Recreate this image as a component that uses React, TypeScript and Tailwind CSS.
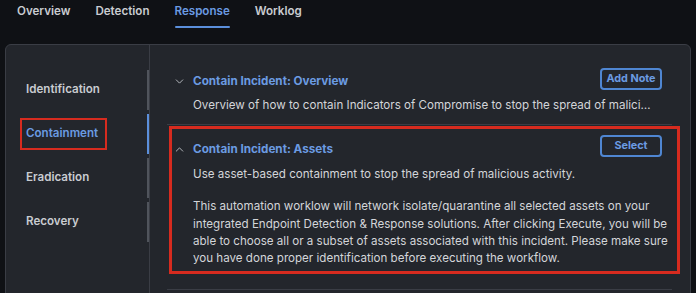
import React from "react";
import { ChevronDown, ChevronUp } from "lucide-react";

const tabs = ["Overview", "Detection", "Response", "Worklog"];
const steps = ["Identification", "Containment", "Eradication", "Recovery"];

export default function App() {
  return (
    <div
      className="w-[696px] h-[293px] overflow-hidden bg-[#0f1115] text-[#c9ccd1]"
      style={{ fontFamily: "Inter, 'Noto Sans', sans-serif" }}
    >
      {/* Top tabs */}
      <div className="flex gap-[25px] pl-[17px] h-[44px]">
        {tabs.map((t) => {
          const active = t === "Response";
          return (
            <div key={t} className="flex flex-col items-stretch pt-[3px]">
              <span
                className={
                  "text-[11.6px] leading-[16px] font-semibold " +
                  (active ? "text-[#6b9be2]" : "text-[#c9ccd1]")
                }
              >
                {t}
              </span>
              {active && <div className="mt-[7px] h-[2px] rounded-full bg-[#5b8fdb]" />}
            </div>
          );
        })}
      </div>

      {/* Panel */}
      <div className="ml-[5px] w-[686px] h-[300px] rounded-[6px] border border-[#3a3d45] bg-[#23262c] flex">
        {/* Sidebar */}
        <div className="w-[144px] shrink-0 border-r border-[#3a3d45] pt-[25px]">
          <div className="flex flex-col gap-[4px]">
            {steps.map((s) => {
              const active = s === "Containment";
              return (
                <div
                  key={s}
                  className={
                    "relative h-[40px] flex items-center pl-[20px] border-r-2 text-[11.6px] font-semibold " +
                    (active ? "border-[#5b8fdb] text-[#6b9be2]" : "border-[#50545c] text-[#c9ccd1]")
                  }
                >
                  {s}
                  {active && (
                    <div className="absolute left-[14px] top-[4px] w-[87px] h-[32px] border-2 border-[#d62b1f]" />
                  )}
                </div>
              );
            })}
          </div>
        </div>

        {/* Content */}
        <div className="flex-1 min-w-0 pl-[17px] pr-[18px]">
          {/* Section 1 */}
          <div className="pt-[23px] pb-[10px] pl-[6px] border-b border-[#3a3d45]">
            <div className="flex items-start h-[22px] pr-[10px]">
              <ChevronDown size={13} strokeWidth={1.75} className="mt-[7px] text-[#b9bcc2] shrink-0" />
              <span className="ml-[7px] mt-[5px] leading-[16px] text-[11.7px] font-bold text-[#6b9be2]">Contain Incident: Overview</span>
              <button className="ml-auto w-[62px] h-[22px] rounded-[4px] border-2 border-[#4f86d2] text-[10.8px] font-bold text-[#6b9be2] leading-none">
                Add Note
              </button>
            </div>
            <p className="mt-[7px] pl-[20px] pr-[18px] text-[11.6px] leading-[17px] text-[#d3d5d9] truncate">
              Overview of how to contain Indicators of Compromise to stop the spread of malicious activity.
            </p>
          </div>

          {/* Section 2 */}
          <div className="relative pt-[10px] pb-[22px] pl-[6px] border-b border-[#3a3d45]">
            <div className="flex items-start h-[22px] pr-[10px]">
              <ChevronUp size={13} strokeWidth={1.75} className="mt-[8px] text-[#b9bcc2] shrink-0" />
              <span className="ml-[7px] mt-[6px] leading-[16px] text-[11.7px] font-bold text-[#6b9be2]">Contain Incident: Assets</span>
              <button className="ml-auto w-[62px] h-[22px] rounded-[4px] border-2 border-[#4f86d2] text-[10.8px] font-bold text-[#6b9be2] leading-none">
                Select
              </button>
            </div>
            <div className="pl-[20px] text-[11.6px] leading-[17.3px] text-[#d3d5d9]">
              <p className="mt-[9px]">Use asset-based containment to stop the spread of malicious activity.</p>
              <p className="mt-[15px]">
                This automation worklow will network isolate/quarantine all selected assets on your
                integrated Endpoint Detection &amp; Response solutions. After clicking Execute, you will be
                able to choose all or a subset of assets associated with this incident. Please make sure
                you have done proper identification before executing the workflow.
              </p>
            </div>
            <div className="absolute left-[2px] -right-[8px] top-[1px] bottom-[15px] border-[3px] border-[#d62b1f] pointer-events-none" />
          </div>
        </div>
      </div>
    </div>
  );
}
